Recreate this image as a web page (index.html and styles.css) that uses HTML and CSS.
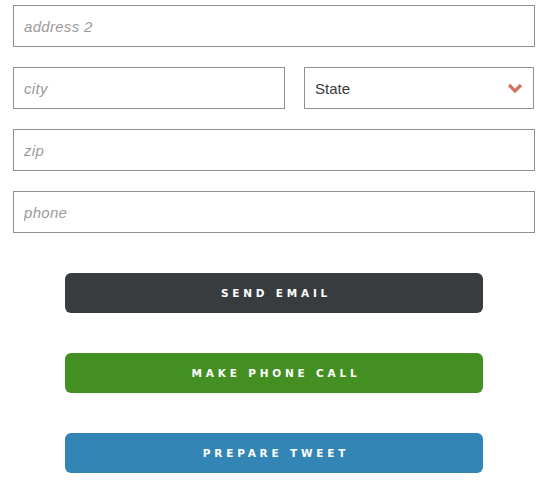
FILE: index.html
```html
<!DOCTYPE html>
<html>
<head>
<meta charset="utf-8">
<link rel="stylesheet" href="styles.css">
</head>
<body>
<form class="form">
  <input class="field" type="text" placeholder="address 2">
  <div class="row">
    <input class="field city" type="text" placeholder="city">
    <div class="select">
      <span class="select-label">State</span>
      <svg class="chevron" width="16" height="11" viewBox="0 0 16 11"><path d="M2 2 L8 8 L14 2" fill="none" stroke="#d4705e" stroke-width="3.2"/></svg>
    </div>
  </div>
  <input class="field" type="text" placeholder="zip">
  <input class="field" type="text" placeholder="phone">
  <div class="buttons">
    <button type="button" class="btn btn-dark">SEND EMAIL</button>
    <button type="button" class="btn btn-green">MAKE PHONE CALL</button>
    <button type="button" class="btn btn-blue">PREPARE TWEET</button>
  </div>
</form>
</body>
</html>
```
FILE: styles.css
```css
html, body { margin: 0; padding: 0; background: #fff; }
body { padding: 5px 11px 0 13px; font-family: "Liberation Sans", Arial, sans-serif; }
.form { display: flex; flex-direction: column; gap: 20px; }
.field {
  box-sizing: border-box;
  height: 42px;
  width: 100%;
  border: 1px solid #8f8f8f;
  border-radius: 0;
  padding: 0 10px;
  font-family: "Liberation Sans", Arial, sans-serif;
  font-size: 15px;
  letter-spacing: 0.3px;
  color: #333;
  outline: none;
  margin: 0;
}
.field::placeholder { color: #9a9a9a; font-style: italic; }
.row { display: flex; gap: 19px; }
.city { width: 272px; flex: none; }
.select {
  box-sizing: border-box;
  flex: 1;
  height: 42px;
  border: 1px solid #8f8f8f;
  display: flex;
  align-items: center;
  justify-content: space-between;
  padding: 0 10px 0 10px;
  margin-right: 1px;
}
.select-label { font-size: 15px; color: #3a3a3a; }
.chevron { display: block; }
.buttons {
  display: flex;
  flex-direction: column;
  gap: 40px;
  padding: 20px 0 0 52px;
}
.btn {
  width: 418px;
  height: 40px;
  border: none;
  border-radius: 6px;
  color: #fff;
  font-family: "DejaVu Sans", sans-serif;
  font-weight: bold;
  font-size: 10.5px;
  letter-spacing: 3.8px;
  padding: 0 0 0 4px;
  cursor: pointer;
}
.btn-dark { background: #393c3f; }
.btn-green { background: #438f21; }
.btn-blue { background: #3385b5; }
```
